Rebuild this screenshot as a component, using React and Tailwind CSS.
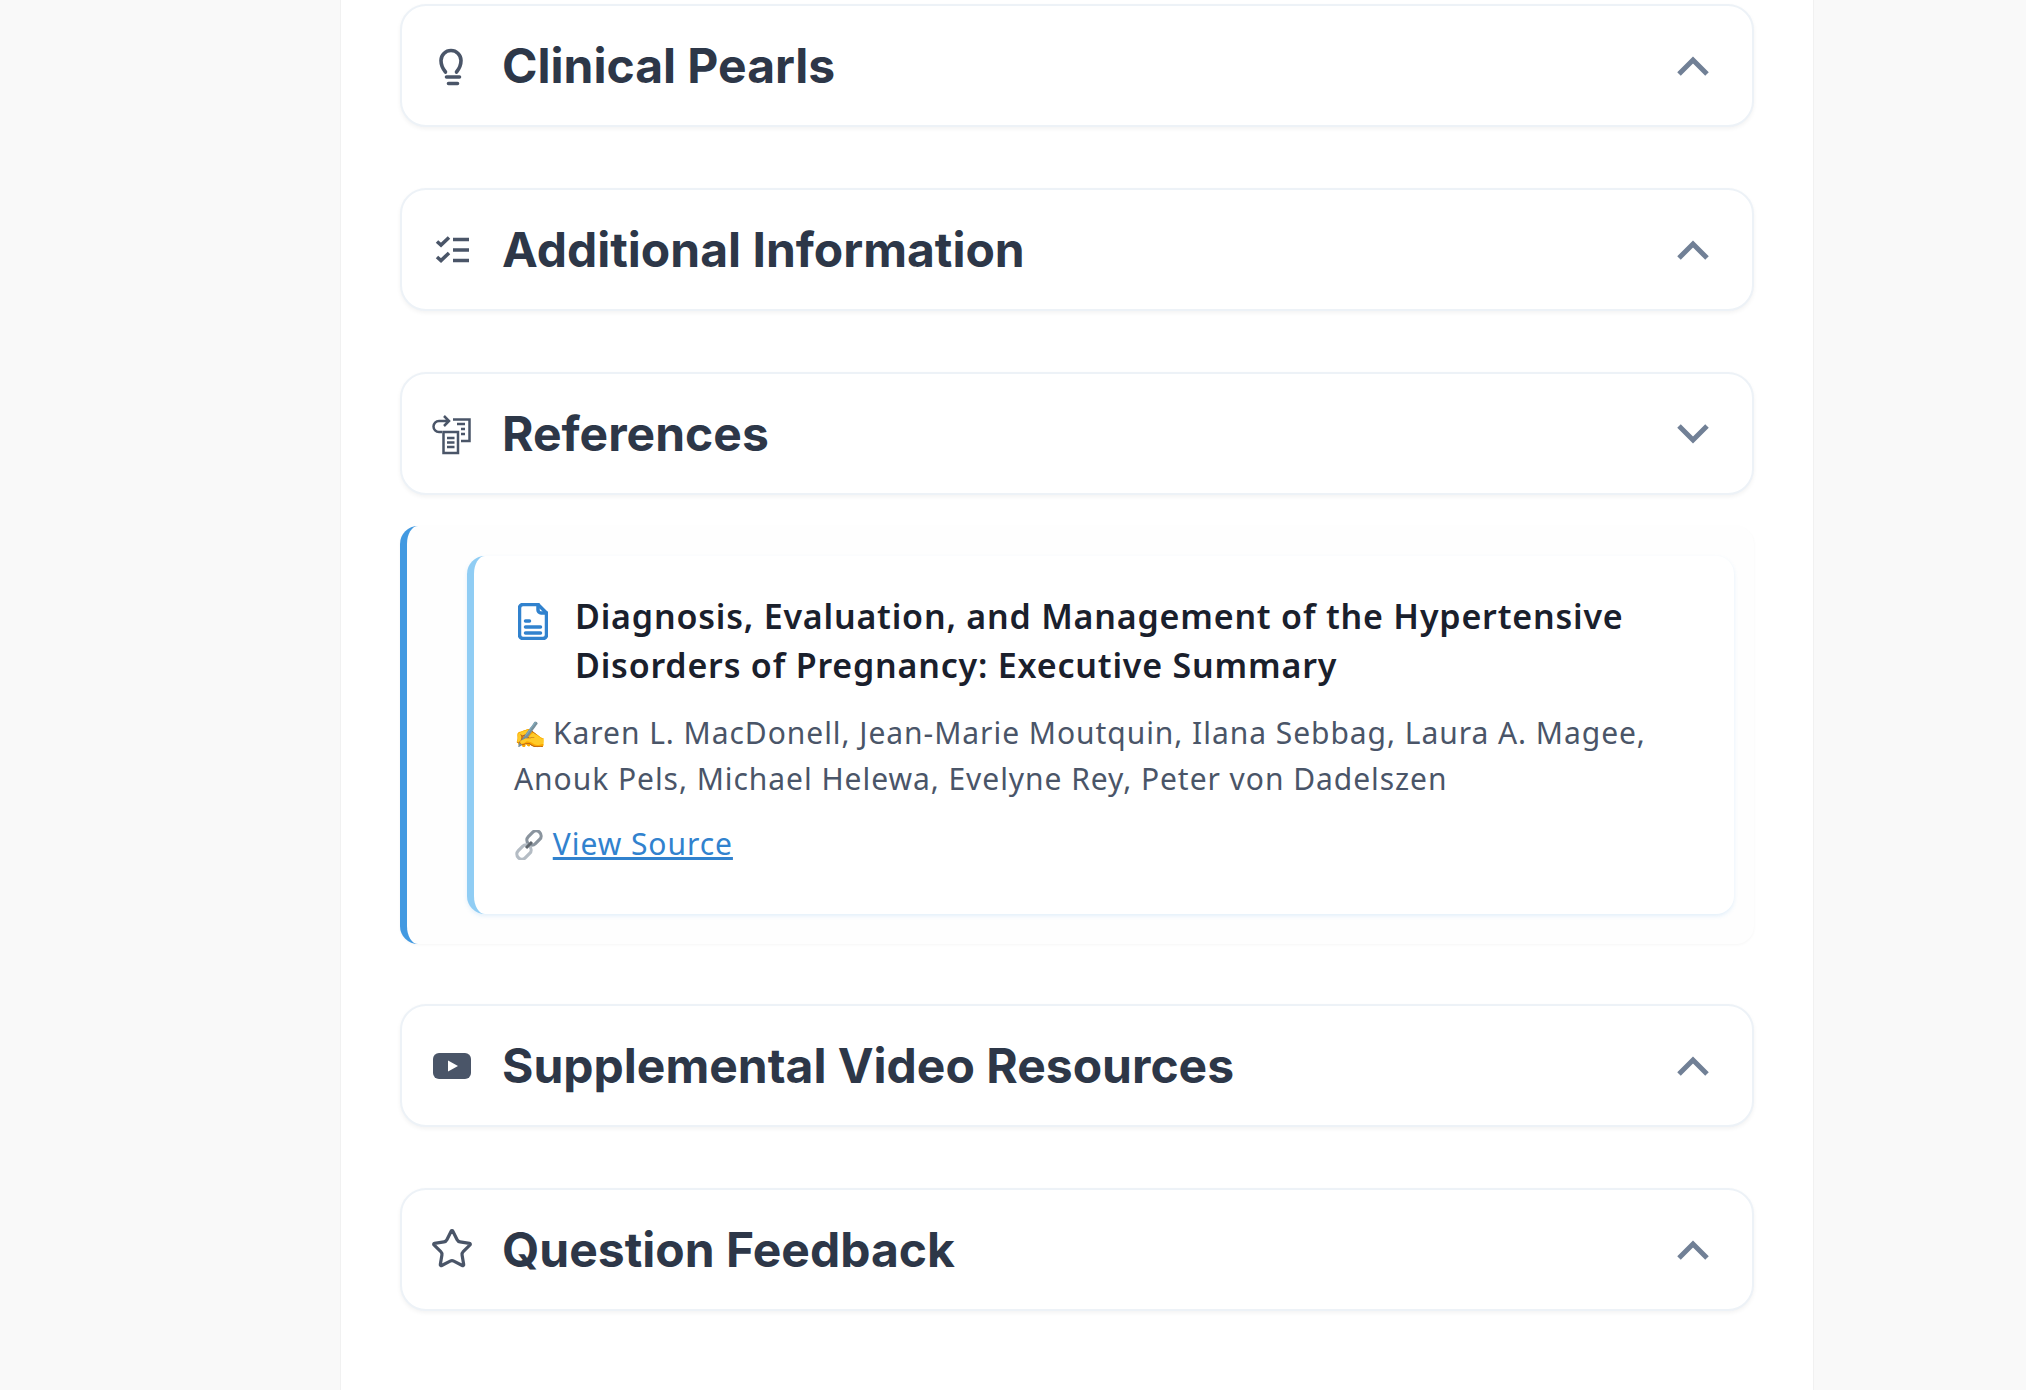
import React from "react";
import { Star } from "lucide-react";

const Bulb = () => (
  <svg width="50" height="50" viewBox="0 0 50 50" fill="none" stroke="#4a5568" strokeWidth="3.6" strokeLinecap="round">
    <path d="M19.500 31C17 28 15 25 15 19.500A10 10 0 0 1 35 19.500C35 25 33 28 30.500 31" />
    <path d="M20.500 36H33.500M22.500 42.500H31.500" />
  </svg>
);
const Checks = () => (
  <svg width="50" height="50" viewBox="0 0 50 50" fill="none" stroke="#4a5568" strokeWidth="3.600">
    <path d="M11 16.500L15 20L23 12.500M11 32L15 35.500L23 28" />
    <path d="M27 14.500H43M27 25H43M27 35.500H43" />
  </svg>
);
const Refs = () => (
  <svg width="50" height="50" viewBox="0 0 50 50" fill="none" stroke="#4a5568" strokeWidth="2.500" className="ml-[-2px]">
    <path d="M20 7L25 12L20 17M25 12H15a5.500 5.500 0 0 0 0 11h3" />
    <path d="M29 10.500H45.500V32H37" />
    <path d="M33 15H41M37 20H41M37 25H41" />
    <path d="M19.500 23H34V44H19.500Z" />
    <path d="M23 29H30.500M23 33.500H30.500M23 38H30.500" />
  </svg>
);
const Youtube = () => (
  <svg width="50" height="50" viewBox="0 0 50 50" className="ml-[1px]">
    <rect x="6" y="12" width="38" height="26" rx="6" fill="#4a5568" />
    <path d="M21 19.500L31 25L21 30.500Z" fill="#fff" />
  </svg>
);
const Chevron = ({ up }) => (
  <svg width="34" height="22" viewBox="0 0 34 22" fill="none" stroke="#718096" strokeWidth="5">
    <path d={up ? "M3 19L17 5L31 19" : "M3 3L17 17L31 3"} />
  </svg>
);
const Doc = () => (
  <svg width="30" height="37" viewBox="0 0 30 37" fill="none" stroke="#3182ce" strokeWidth="3.500" strokeLinecap="round" strokeLinejoin="round" className="shrink-0 mt-[11px]">
    <path d="M5 1.500H20L28.500 10V32A3.500 3.500 0 0 1 25 35.500H5A3.500 3.500 0 0 1 1.500 32V5A3.500 3.500 0 0 1 5 1.500Z" />
    <path d="M20 1.500V7A3 3 0 0 0 23 10H28.500" />
    <path d="M7.500 18H11.500M7.500 24H22.500M7.500 30H22.500" />
  </svg>
);
const Chain = () => (
  <svg width="30" height="30" viewBox="0 0 30 30" fill="none" className="inline-block align-[-5px]">
    <rect x="12" y="3" width="16" height="10" rx="5" transform="rotate(-45 20 8)" stroke="#8a949e" strokeWidth="3.200" />
    <rect x="2" y="17" width="16" height="10" rx="5" transform="rotate(-45 10 22)" stroke="#b4bcc4" strokeWidth="3.200" />
    <path d="M12 18L18 12" stroke="#5f666d" strokeWidth="3" />
  </svg>
);

const Card = ({ icon, title, up = true }) => (
  <div className="h-[123px] shrink-0 rounded-[26px] border-2 border-[#edf2f7] bg-white shadow-[0_2px_4px_rgba(0,0,0,0.05)] flex items-center pl-[24px] pr-[42px]">
    <div className="w-[50px] h-[50px] shrink-0">{icon}</div>
    <h3 className="ml-[26px] flex-1 font-['Inter',sans-serif] font-bold text-[48px] leading-none text-[#2d3748]">{title}</h3>
    <Chevron up={up} />
  </div>
);

export default function App() {
  return (
    <div className="h-[1390px] overflow-hidden bg-[#f9f9f9]">
      <main className="w-[1474px] ml-[340px] h-full bg-white pl-[59px] pr-[59px] pt-[4px] border-x border-[#f1f1f1] flex flex-col">
        <Card icon={<Bulb />} title="Clinical Pearls" />
        <div className="h-[61px] shrink-0" />
        <Card icon={<Checks />} title="Additional Information" />
        <div className="h-[61px] shrink-0" />
        <Card icon={<Refs />} title="References" up={false} />
        <section className="mt-[31px] h-[418px] shrink-0 rounded-[18px] border-l-[7px] border-[#4299e1] bg-[#fefefe] shadow-[0_1px_3px_rgba(0,0,0,0.04)] pl-[60px] pr-[20px] py-[30px]">
          <div className="h-[358px] rounded-[18px] border-l-[7px] border-[#90cdf4] bg-white shadow-[0_2px_4px_rgba(66,153,225,0.15)] pl-[40px] pr-[40px] pt-[36px] font-['Noto_Sans',sans-serif]">
            <div className="flex items-start gap-[27px] ml-[4px]">
              <Doc />
              <h4 className="font-semibold text-[34px] leading-[49px] tracking-[0.8px] text-[#1a202c]">Diagnosis, Evaluation, and Management of the Hypertensive Disorders of Pregnancy: Executive Summary</h4>
            </div>
            <p className="mt-[21px] text-[30px] leading-[44.5px] tracking-[0.95px] text-[#4a5568]"><span className="inline-block w-[39px] text-[26px] tracking-normal">✍️</span>Karen L. MacDonell, Jean-Marie Moutquin, Ilana Sebbag, Laura A. Magee, Anouk Pels, Michael Helewa, Evelyne Rey, Peter von Dadelszen</p>
            <p className="mt-[20px] text-[30px] leading-[45px] tracking-[0.95px] text-[#4a5568]"><Chain /> <a href="#" className="text-[#3182ce] underline">View Source</a></p>
          </div>
        </section>
        <div className="h-[60px] shrink-0" />
        <Card icon={<Youtube />} title="Supplemental Video Resources" />
        <div className="h-[61px] shrink-0" />
        <Card icon={<Star size={44} strokeWidth={1.75} color="#4a5568" className="mt-[2px] ml-[4px]" />} title="Question Feedback" />
      </main>
    </div>
  );
}
